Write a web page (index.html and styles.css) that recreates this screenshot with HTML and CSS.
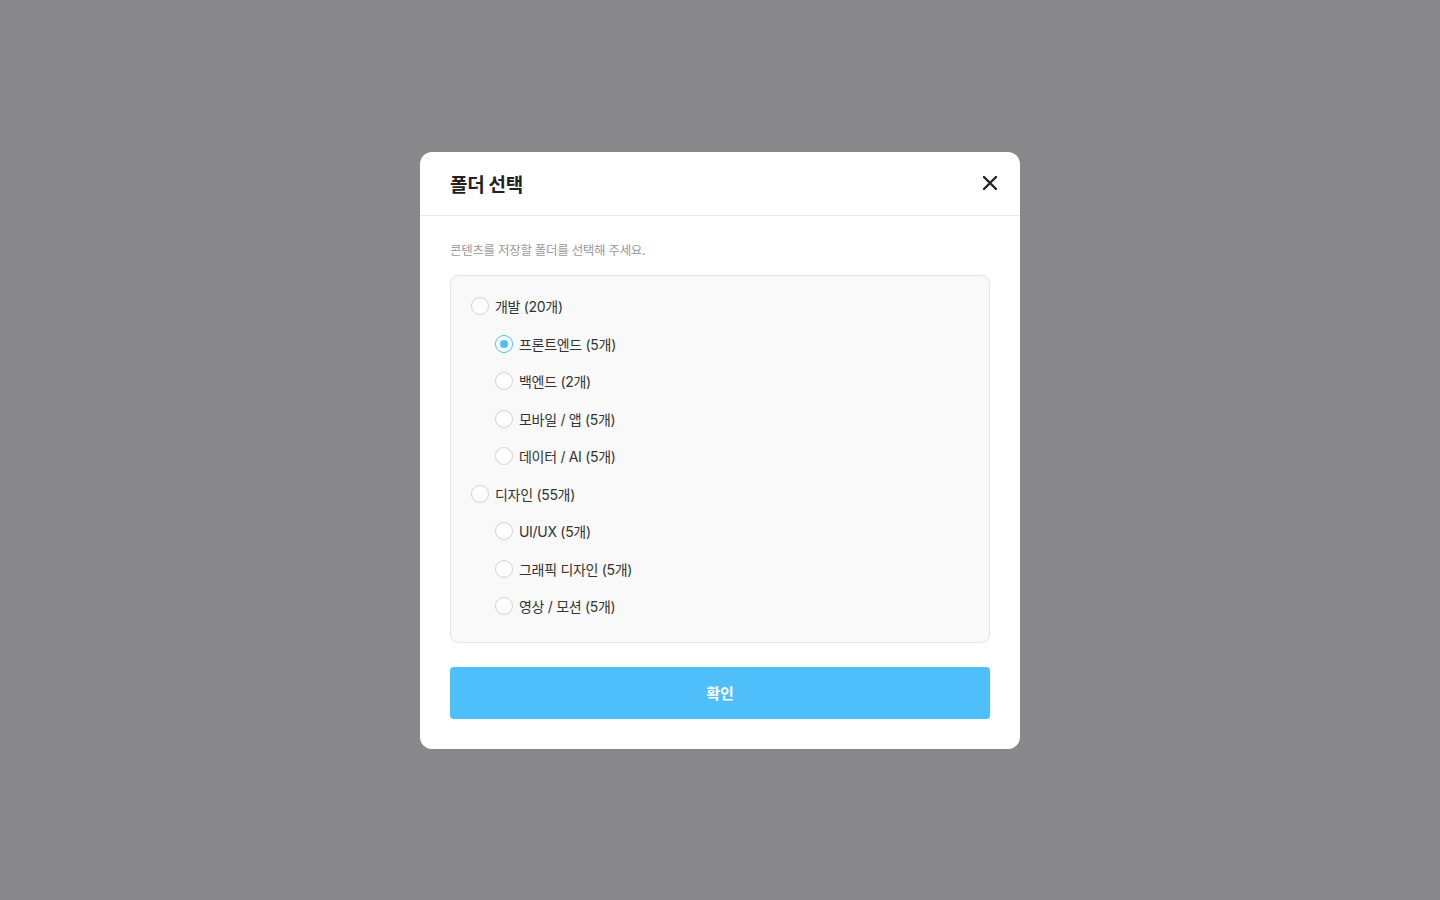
FILE: index.html
```html
<!DOCTYPE html>
<html lang="ko">
<head>
    <meta charset="UTF-8">
    <meta name="viewport" content="width=device-width, initial-scale=1.0">
    <title>폴더 선택</title>
    <link rel="stylesheet" href="styles.css">
</head>
<body>
    <div class="overlay">
        <div class="modal">
            <!-- Header -->
            <div class="modal-header">
                <h2 class="modal-title">폴더 선택</h2>
                <button class="close-btn" type="button" aria-label="닫기">
                    <svg width="14" height="14" viewBox="0 0 14 14">
                        <path d="M1 1 L13 13 M13 1 L1 13" stroke="#222" stroke-width="2.4" stroke-linecap="round"/>
                    </svg>
                </button>
            </div>

            <!-- Body -->
            <div class="modal-body">
                <p class="desc">콘텐츠를 저장할 폴더를 선택해 주세요.</p>

                <div class="folder-list">
                    <label class="folder-item"><input type="radio" name="folder"><span class="radio"></span>개발 (20개)</label>
                    <label class="folder-item child"><input type="radio" name="folder" checked><span class="radio"></span>프론트엔드 (5개)</label>
                    <label class="folder-item child"><input type="radio" name="folder"><span class="radio"></span>백엔드 (2개)</label>
                    <label class="folder-item child"><input type="radio" name="folder"><span class="radio"></span>모바일 / 앱 (5개)</label>
                    <label class="folder-item child"><input type="radio" name="folder"><span class="radio"></span>데이터 / AI (5개)</label>
                    <label class="folder-item"><input type="radio" name="folder"><span class="radio"></span>디자인 (55개)</label>
                    <label class="folder-item child"><input type="radio" name="folder"><span class="radio"></span>UI/UX (5개)</label>
                    <label class="folder-item child"><input type="radio" name="folder"><span class="radio"></span>그래픽 디자인 (5개)</label>
                    <label class="folder-item child"><input type="radio" name="folder"><span class="radio"></span>영상 / 모션 (5개)</label>
                </div>

                <button class="confirm-btn" type="button">확인</button>
            </div>
        </div>
    </div>
</body>
</html>
```

FILE: styles.css
```css
* {
    box-sizing: border-box;
}

body {
    margin: 0;
    font-family: Inter, "Noto Sans CJK KR", sans-serif;
    color: #333;
}

.overlay {
    width: 100%;
    height: 100vh;
    background-color: #88888a;
    display: flex;
    align-items: center;
    justify-content: center;
}

.modal {
    width: 600px;
    background-color: #fff;
    border-radius: 12px;
}

.modal-header {
    height: 64px;
    padding: 0 23px 0 30px;
    display: flex;
    align-items: center;
    justify-content: space-between;
    border-bottom: 1px solid #e8e8e8;
}

.modal-title {
    margin: 0;
    font-size: 19px;
    font-weight: 700;
    color: #222;
    letter-spacing: -0.3px;
}

.close-btn {
    width: 14px;
    height: 14px;
    padding: 0;
    border: none;
    background: none;
    display: flex;
    align-items: center;
    justify-content: center;
    cursor: pointer;
}

.modal-body {
    padding: 26px 30px 30px;
}

.desc {
    margin: 0 0 15px;
    font-size: 12.5px;
    line-height: 18px;
    color: #999;
    letter-spacing: -0.3px;
}

.folder-list {
    background-color: #f9f9f9;
    border: 1px solid #e5e5e5;
    border-radius: 8px;
    padding: 12px 20px 16.5px;
    display: flex;
    flex-direction: column;
}

.folder-item {
    height: 37.5px;
    display: flex;
    align-items: center;
    gap: 6px;
    font-size: 14px;
    color: #333;
    letter-spacing: -0.3px;
    cursor: pointer;
}

.folder-item.child {
    padding-left: 24px;
}

.folder-item input {
    display: none;
}

.radio {
    width: 18px;
    height: 18px;
    border: 1.5px solid #d2d2d2;
    border-radius: 50%;
    background-color: #fff;
    display: flex;
    align-items: center;
    justify-content: center;
    flex-shrink: 0;
}

.folder-item input:checked + .radio {
    border-color: #4fbffc;
}

.folder-item input:checked + .radio::after {
    content: "";
    width: 8px;
    height: 8px;
    border-radius: 50%;
    background-color: #4fbffc;
}

.confirm-btn {
    margin-top: 24px;
    width: 100%;
    height: 52px;
    border: none;
    border-radius: 4px;
    background-color: #4fbffc;
    color: #fff;
    font-family: inherit;
    font-size: 15px;
    font-weight: 700;
    cursor: pointer;
}
```
